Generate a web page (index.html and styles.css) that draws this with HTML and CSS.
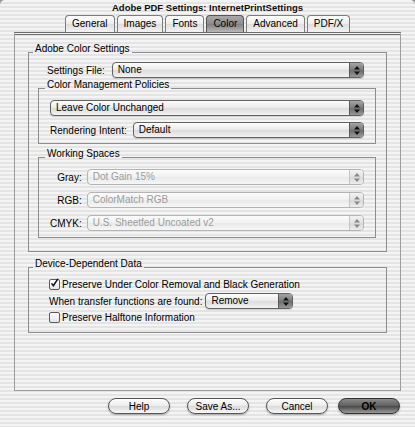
FILE: index.html
```html
<!DOCTYPE html>
<html lang="en">
<head>
  <meta charset="UTF-8">
  <title>Adobe PDF Settings</title>
  <link rel="stylesheet" href="styles.css">
</head>
<body>
  <div class="window">
    <div class="titlebar">Adobe PDF Settings: InternetPrintSettings</div>

    <div class="tabs">
      <div class="tab">General</div>
      <div class="tab">Images</div>
      <div class="tab">Fonts</div>
      <div class="tab active">Color</div>
      <div class="tab">Advanced</div>
      <div class="tab">PDF/X</div>
    </div>

    <div class="panel">
      <fieldset class="group outer">
        <legend>Adobe Color Settings</legend>
        <div class="row settings-row">
          <span class="label">Settings File:</span>
          <div class="popup">
            <span class="value">None</span>
            <span class="arrows"><svg width="6" height="9" viewBox="0 0 6 9"><path d="M3 0L6 3.5H0z M0 5.5H6L3 9z"/></svg></span>
          </div>
        </div>

        <fieldset class="group inner policies">
          <legend>Color Management Policies</legend>
          <div class="popup">
            <span class="value">Leave Color Unchanged</span>
            <span class="arrows"><svg width="6" height="9" viewBox="0 0 6 9"><path d="M3 0L6 3.5H0z M0 5.5H6L3 9z"/></svg></span>
          </div>
          <div class="row intent-row">
            <span class="label">Rendering Intent:</span>
            <div class="popup">
              <span class="value">Default</span>
              <span class="arrows"><svg width="6" height="9" viewBox="0 0 6 9"><path d="M3 0L6 3.5H0z M0 5.5H6L3 9z"/></svg></span>
            </div>
          </div>
        </fieldset>

        <fieldset class="group inner spaces">
          <legend>Working Spaces</legend>
          <div class="spaces-grid">
            <span class="label">Gray:</span>
            <div class="popup disabled">
              <span class="value">Dot Gain 15%</span>
              <span class="arrows"><svg width="6" height="9" viewBox="0 0 6 9"><path d="M3 0L6 3.5H0z M0 5.5H6L3 9z"/></svg></span>
            </div>
            <span class="label">RGB:</span>
            <div class="popup disabled">
              <span class="value">ColorMatch RGB</span>
              <span class="arrows"><svg width="6" height="9" viewBox="0 0 6 9"><path d="M3 0L6 3.5H0z M0 5.5H6L3 9z"/></svg></span>
            </div>
            <span class="label">CMYK:</span>
            <div class="popup disabled">
              <span class="value">U.S. Sheetfed Uncoated v2</span>
              <span class="arrows"><svg width="6" height="9" viewBox="0 0 6 9"><path d="M3 0L6 3.5H0z M0 5.5H6L3 9z"/></svg></span>
            </div>
          </div>
        </fieldset>
      </fieldset>

      <fieldset class="group outer device">
        <legend>Device-Dependent Data</legend>
        <div class="check-row first">
          <span class="check"><svg width="12" height="12" viewBox="0 0 12 12"><path d="M2 6.5L4.5 9.5L10.5 0.5" fill="none" stroke="#111" stroke-width="2"/></svg></span>
          <span>Preserve Under Color Removal and Black Generation</span>
        </div>
        <div class="row transfer-row">
          <span class="label">When transfer functions are found:</span>
          <div class="popup small">
            <span class="value">Remove</span>
            <span class="arrows"><svg width="6" height="9" viewBox="0 0 6 9"><path d="M3 0L6 3.5H0z M0 5.5H6L3 9z"/></svg></span>
          </div>
        </div>
        <div class="check-row second">
          <span class="check"></span>
          <span>Preserve Halftone Information</span>
        </div>
      </fieldset>
    </div>

    <div class="buttons">
      <button class="btn">Help</button>
      <button class="btn">Save As...</button>
      <button class="btn">Cancel</button>
      <button class="btn ok">OK</button>
    </div>
  </div>
</body>
</html>
```

FILE: styles.css
```css
* {
  font-family: "Liberation Sans", Arial, sans-serif;
  box-sizing: border-box;
}
body {
  margin: 0;
  background: #9a9a9a;
}
.window {
  width: 415px;
  height: 427px;
  overflow: hidden;
  border-radius: 5px 5px 0 0;
  font-size: 10px;
  color: #000;
  background: repeating-linear-gradient(to bottom, #f4f4f4 0, #f4f4f4 2px, #e4e4e4 2px, #e4e4e4 4px);
}
.titlebar {
  height: 15px;
  line-height: 15px;
  text-align: center;
  font-weight: bold;
  font-size: 9.5px;
  color: #111;
}
.tabs {
  display: flex;
  gap: 2px;
  height: 17px;
  padding-left: 65px;
}
.tab {
  height: 17px;
  line-height: 15px;
  padding: 0 6px;
  border: 1px solid #7c7c7c;
  border-bottom: none;
  border-radius: 4px 4px 0 0;
  background: linear-gradient(#ffffff, #ececec 50%, #dedede 51%, #f2f2f2);
}
.tab.active {
  background: linear-gradient(#a9a9a9, #8c8c8c 50%, #7f7f7f 51%, #b8b8b8);
  border-color: #555;
}
.panel {
  margin: 0 14px;
  height: 359px;
  padding-top: 8px;
  border: 1px solid #9c9c9c;
  border-top: 3px double #6e6e6e;
}

/* group boxes */
.group {
  margin: 0;
  border: 1px solid #8e8e8e;
  min-inline-size: 0;
}
.group legend {
  margin-left: -5px;
  padding: 0 2px 6px;
  line-height: 12px;
  font-size: 10px;
}
.outer {
  margin: 0 13px;
  padding: 0 10px 13px 9px;
}
.inner {
  padding: 0 11px;
}
.policies {
  margin-top: 1px;
  padding-bottom: 5px;
}
.spaces {
  margin-top: 4px;
  padding-bottom: 6px;
}
.device {
  margin-top: 6px;
  padding-bottom: 9px;
}

.row {
  display: flex;
  align-items: center;
}
.settings-row {
  margin-top: 1px;
  padding: 0 12px 0 9px;
  gap: 7px;
}
.settings-row .popup,
.intent-row .popup {
  flex: 1;
}
.policies > .popup {
  margin-top: 3px;
}
.intent-row {
  margin-top: 6px;
  gap: 6px;
}
.spaces-grid {
  display: grid;
  grid-template-columns: auto 1fr;
  column-gap: 5px;
  row-gap: 7px;
  align-items: center;
  margin-top: 3px;
}
.spaces-grid .label {
  justify-self: end;
}

/* popup menus */
.popup {
  display: flex;
  height: 16px;
  border: 1px solid #626262;
  border-radius: 4px;
  overflow: hidden;
  background: linear-gradient(#fdfdfd, #ececec 45%, #dcdcdc 55%, #f3f3f3);
  box-shadow: 0 1px 1px rgba(0, 0, 0, 0.15);
}
.popup .value {
  flex: 1;
  padding-left: 5px;
  line-height: 14px;
  white-space: nowrap;
}
.popup .arrows {
  width: 14px;
  display: flex;
  align-items: center;
  justify-content: center;
  border-left: 1px solid #5a5a5a;
  background: linear-gradient(#a4a4a4, #7a7a7a 50%, #6c6c6c 51%, #979797);
}
.popup .arrows path {
  fill: #111;
}
.popup.disabled {
  border-color: #b4b4b4;
  box-shadow: none;
  background: linear-gradient(#fbfbfb, #f1f1f1 50%, #e9e9e9 51%, #f6f6f6);
}
.popup.disabled .value {
  color: #9c9c9c;
}
.popup.disabled .arrows {
  border-left-color: #c4c4c4;
  background: linear-gradient(#f2f2f2, #e2e2e2 50%, #d8d8d8 51%, #ececec);
}
.popup.disabled .arrows path {
  fill: #888;
}
.popup.small {
  width: 88px;
}

/* device dependent */
.check-row {
  display: flex;
  align-items: center;
  gap: 2px;
  height: 12px;
  padding-left: 11px;
}
.check-row.first {
  margin-top: 2px;
}
.check-row.second {
  margin-top: 2px;
}
.check {
  width: 11px;
  height: 11px;
  border: 1px solid #5c5c5c;
  border-radius: 2px;
  background: linear-gradient(#ffffff, #e4e4e4);
  display: flex;
}
.check svg {
  margin: -3px 0 0 0;
}
.transfer-row {
  margin-top: 3px;
  padding-left: 11px;
  gap: 3px;
}

/* buttons */
.buttons {
  display: flex;
  justify-content: flex-end;
  padding-right: 15px;
  margin-top: 7px;
}
.btn {
  width: 62px;
  height: 16px;
  margin-left: 17px;
  padding: 0;
  font-size: 10px;
  color: #000;
  border: 1px solid #555;
  border-radius: 8px;
  background: linear-gradient(#fdfdfd, #ebebeb 50%, #dadada 51%, #f7f7f7);
  box-shadow: 0 1px 2px rgba(0, 0, 0, 0.3);
}
.btn.ok {
  margin-left: 10px;
  font-weight: bold;
  border-color: #333;
  background: linear-gradient(#8a8a8a, #5e5e5e 50%, #474747 51%, #9a9a9a);
}
```
